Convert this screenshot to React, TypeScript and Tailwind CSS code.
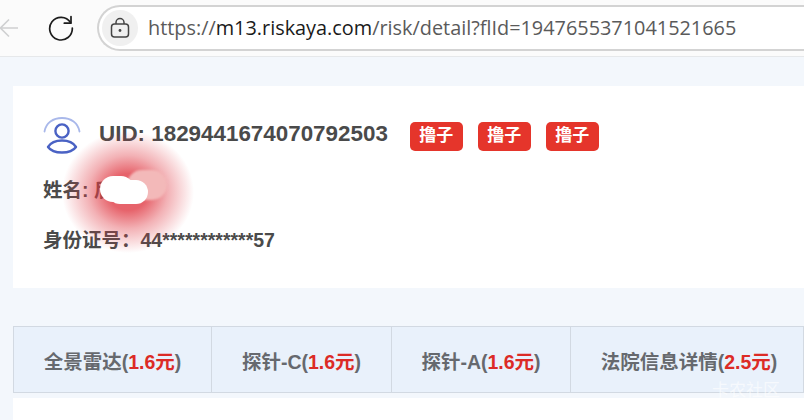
const CJK = "font-['Liberation_Sans','Noto_Sans_CJK_SC',sans-serif]";

const tabs = [
  { label: "全景雷达", price: "1.6元", width: "w-[198px]" },
  { label: "探针-C", price: "1.6元", width: "w-[180px]" },
  { label: "探针-A", price: "1.6元", width: "w-[179px]" },
  { label: "法院信息详情", price: "2.5元", width: "flex-1 pl-[4px]" },
];

function Tag() {
  return (
    <span className="flex h-[29px] w-[53px] items-center justify-center rounded-[5px] bg-[#e5352b] text-[17px] font-bold text-white">
      撸子
    </span>
  );
}

function UserIcon() {
  return (
    <svg width="38" height="38" viewBox="0 0 38 38" fill="none" className="shrink-0">
      <path d="M1.5 15.5C3 7 10 2 19 2s16 5 17.5 13.5" stroke="#a9b8ea" strokeWidth="1.8" strokeLinecap="round" />
      <circle cx="19" cy="15" r="6.6" stroke="#4a62c4" strokeWidth="2.4" />
      <path d="M19 24.5c-6 0-11.500 2.500-14 6.500 2.500 3.500 8 5.500 14 5.500s11.500-2 14-5.500c-2.500-4-8-6.500-14-6.500z" stroke="#4a62c4" strokeWidth="2.4" strokeLinejoin="round" />
    </svg>
  );
}

export default function App() {
  return (
    <div className={`relative h-[420px] w-[804px] overflow-hidden bg-[#f3f7fc] ${CJK}`}>
      {/* browser chrome */}
      <div className="flex h-[57px] items-center border-b border-[#e6e8ea] bg-[#fbfbfb]">
        <svg width="22" height="24" viewBox="0 0 22 24" fill="none" className="ml-[-2px] shrink-0">
          <path d="M20 12H3M11 3.500 2.500 12l8.500 8.500" stroke="#cfd0d1" strokeWidth="1.600" />
        </svg>
        <svg width="28" height="28" viewBox="0 0 28 28" fill="none" className="ml-[27px] shrink-0">
          <path d="M23.500 8.500A11.300 11.300 0 1 0 25.300 14" stroke="#1c1c1c" strokeWidth="1.700" strokeLinecap="round" />
          <path d="M24 2.500v6.700h-6.700" stroke="#1c1c1c" strokeWidth="1.700" strokeLinecap="round" strokeLinejoin="round" />
        </svg>
        <div className="ml-[22px] flex h-[46px] w-[740px] shrink-0 items-center rounded-l-[23px] border-2 border-r-0 border-[#d3d3d3] bg-white pl-[3px]">
          <div className="flex h-[36px] w-[36px] items-center justify-center rounded-full bg-[#f0f0f0]">
            <svg width="20" height="22" viewBox="0 0 20 22" fill="none">
              <rect x="1.500" y="7" width="17" height="13" rx="3" stroke="#444" strokeWidth="1.500" />
              <path d="M6 7V5.500a4 4 0 0 1 8 0V7" stroke="#444" strokeWidth="1.500" />
              <circle cx="10" cy="13.500" r="1.400" fill="#444" />
            </svg>
          </div>
          <p className="ml-[10px] font-['Open_Sans',sans-serif] text-[19.87px] whitespace-nowrap text-[#5a5a5a]">
            https://<span className="text-[#1a1a1a]">m13.riskaya.com</span>/risk/detail?flId=1947655371041521665
          </p>
        </div>
      </div>

      {/* user card */}
      <section className="mt-[29px] ml-[13px] flex h-[202px] flex-col bg-white pt-[30px] pl-[30px] text-[#4a4a4a]">
        <div className="flex h-[38px] items-center">
          <UserIcon />
          <h1 className="mb-[2px] ml-[18px] text-[22.4px] font-bold">UID: 1829441674070792503</h1>
          <div className="mt-[2px] ml-[22px] flex gap-[15px]">
            <Tag />
            <Tag />
            <Tag />
          </div>
        </div>
        <p className="mt-[23px] text-[19.5px] leading-[26px] font-bold">姓名: 后</p>
        <p className="mt-[24px] text-[19.5px] leading-[26px] font-bold">身份证号：44************57</p>
      </section>

      {/* tabs */}
      <nav className="mt-[38px] ml-[13px] flex h-[67px] border-y border-l border-[#d2d9e2] bg-[#e9f1fb]">
        {tabs.map((tab) => (
          <div
            key={tab.label}
            className={`flex items-center justify-center border-r border-[#d2d9e2] pt-[6px] text-[19.5px] font-bold whitespace-nowrap text-[#66696e] ${tab.width}`}
          >
            {tab.label}(<span className="text-[#dc2b26]">{tab.price}</span>)
          </div>
        ))}
      </nav>
      <div className="mt-[5px] ml-[13px] h-[30px] bg-white" />

      {/* redaction smudge over the name */}
      <div className="absolute top-[131px] left-[62px] h-[122px] w-[132px] rounded-full bg-[radial-gradient(closest-side,rgba(224,60,70,0.8)_30%,rgba(224,60,70,0.4)_60%,rgba(224,60,70,0)_100%)]" />
      <div className="absolute top-[170px] left-[127px] h-[30px] w-[40px] rounded-full bg-[#f3b9b9] blur-[1px]" />
      <div className="absolute top-[176px] left-[100px] h-[26px] w-[34px] rounded-full bg-white" />
      <div className="absolute top-[180px] left-[108px] h-[24px] w-[40px] rounded-full bg-white" />

      {/* watermark */}
      <span className="absolute top-[378px] left-[712px] text-[17px] text-white/60">卡农社区</span>
    </div>
  );
}
